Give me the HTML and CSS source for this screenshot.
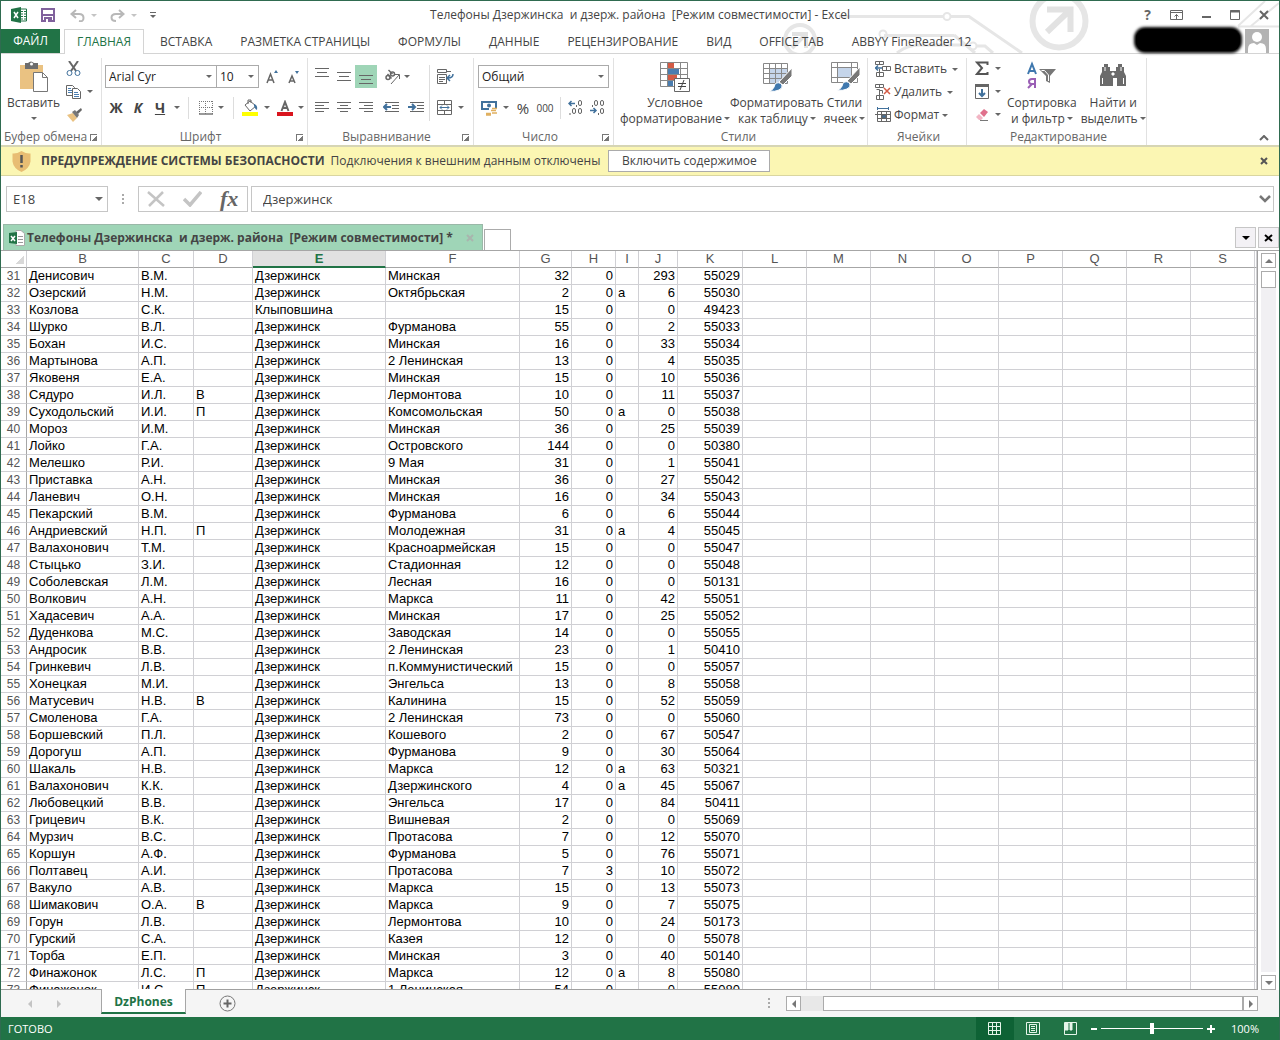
FILE: index.html
```html
<!DOCTYPE html>
<html lang="ru">
<head>
<meta charset="utf-8">
<meta name="viewport" content="width=device-width, initial-scale=1">
<title>Телефоны Дзержинска и дзерж. района - Excel</title>
<link rel="stylesheet" href="styles.css">
<script src="app.js" defer></script>
</head>
<body>
<div class="app">
  <header class="top">
    <svg class="art" width="500" height="52" viewBox="0 0 500 52" aria-hidden="true">
      <g fill="none" stroke="#e6e6e6" stroke-width="3">
        <path d="M60 15.500H164M172 15.500H190L243 52"/><circle cx="168" cy="15.500" r="3.500" stroke-width="2"/>
        <path d="M105 34.500H175M118 52Q128 44 140 44H190M198 45H206L214 52M175 34L196 52"/>
        <circle cx="194" cy="45" r="3.500" stroke-width="2"/><circle cx="104" cy="33" r="3.500" stroke-width="2"/>
        <path d="M459 25L486 0M472 25L500 2M459 25.500H500" stroke-width="2"/>
        <circle cx="280" cy="20" r="26.500" stroke-width="6"/>
        <circle cx="21" cy="39" r="15" stroke-width="4"/>
      </g>
      <g fill="none" stroke="#e2e2e2">
        <path d="M268 8.500H291.500V31M290 10L268 31" stroke-width="6"/>
        <path d="M13 33H27V47M27 33L13 47" stroke-width="4"/>
      </g>
    </svg>
    <div class="titlebar">
      <div class="qat">
        <svg class="xl" width="16" height="16" viewBox="0 0 16 16" aria-hidden="true"><path d="M9 2h6.500v12H9z" fill="#fff" stroke="#217346"/><path d="M10 4.500h2M13 4.500h2M10 7h2M13 7h2M10 9.500h2M13 9.500h2M10 12h2M13 12h2" stroke="#217346"/><path d="M0 2l10-2v16L0 14z" fill="#217346"/><path d="M3 5l4 6M7 5l-4 6" stroke="#fff" stroke-width="1.500"/></svg>
        <button class="tool save" aria-label="Сохранить"><svg width="14" height="14" viewBox="0 0 14 14"><path d="M1 1h12v12H1z" fill="#fff" stroke="#80619c" stroke-width="2"/><path d="M1 7h12" stroke="#80619c" stroke-width="2"/><path d="M3 9h8v5H3z" fill="#80619c"/><path d="M5 11h2v3H5z" fill="#fff"/></svg></button>
        <button class="tool undo" aria-label="Отменить"><svg width="15" height="13" viewBox="0 0 15 13" fill="none" stroke="#b8b8b8" stroke-width="2"><path d="M6 1L1.500 5 6 9M2 5h7q4.500 0 4.500 4T9 12"/></svg><i class="caret pale"></i></button>
        <button class="tool redo" aria-label="Вернуть"><svg width="15" height="13" viewBox="0 0 15 13" fill="none" stroke="#b8b8b8" stroke-width="2"><path d="M9 1l4.500 4L9 9M13 5H6Q1.500 5 1.500 8.500T6 12"/></svg><i class="caret pale"></i></button>
        <button class="tool" aria-label="Настройка панели"><svg width="6" height="6" viewBox="0 0 6 6"><path d="M0 .5h6" stroke="#666"/><path d="M0 3h6L3 6z" fill="#666"/></svg></button>
      </div>
      <h1 class="title">Телефоны Дзержинска&nbsp; и дзерж. района&nbsp; [Режим совместимости] - Excel</h1>
      <div class="winctl">
        <button class="tool help" aria-label="Справка">?</button>
        <button class="tool" aria-label="Параметры ленты"><svg width="13" height="10" viewBox="0 0 13 10" fill="none" stroke="#666"><path d="M.5.5h12v9H.5zM.5 2.500h12M6.500 9V4.500M4.500 6.500l2-2 2 2"/></svg></button>
        <button class="tool" aria-label="Свернуть"><svg width="9" height="10" viewBox="0 0 9 10"><path d="M0 7h9" stroke="#666" stroke-width="2"/></svg></button>
        <button class="tool" aria-label="Развернуть"><svg width="10" height="10" viewBox="0 0 10 10"><path d="M.5.500h9v9h-9z" fill="none" stroke="#666"/><path d="M0 1.500h10" stroke="#666" stroke-width="2"/></svg></button>
        <button class="tool" aria-label="Закрыть"><svg width="10" height="10" viewBox="0 0 10 10"><path d="M1 1l8 8M9 1l-8 8" stroke="#666" stroke-width="2"/></svg></button>
      </div>
    </div>
    <div class="tabbar">
      <nav class="tabs">
        <button class="file">ФАЙЛ</button>
        <button class="tab active">ГЛАВНАЯ</button>
        <button class="tab">ВСТАВКА</button>
        <button class="tab">РАЗМЕТКА СТРАНИЦЫ</button>
        <button class="tab">ФОРМУЛЫ</button>
        <button class="tab">ДАННЫЕ</button>
        <button class="tab">РЕЦЕНЗИРОВАНИЕ</button>
        <button class="tab">ВИД</button>
        <button class="tab">OFFICE TAB</button>
        <button class="tab">ABBYY FineReader 12</button>
      </nav>
      <div class="account">
        <span class="redacted"></span>
        <svg width="24" height="24" viewBox="0 0 24 24" aria-hidden="true"><path d="M0 0h24v24H0z" fill="#b3b3b3"/><circle cx="12" cy="8" r="5" fill="#fff"/><path d="M3 24v-4q0-6 6-6l3 2 3-2q6 0 6 6v4z" fill="#fff"/></svg>
      </div>
    </div>
  </header>

  <section class="ribbon">
    <div class="group g-clip">
      <div class="body">
        <button class="big paste"><svg width="30" height="32" viewBox="0 0 30 32"><path d="M1 4h23v24H1z" fill="#eac282"/><path d="M6 2h3q3-3 6 0h4v6H6z" fill="#6d6d6d"/><circle cx="12.500" cy="3" r="1.500" fill="#fff"/><path d="M14.500 11.500h9l5 5v14h-14z" fill="#fff" stroke="#777"/><path d="M23.500 11.500v5h5" fill="none" stroke="#777"/></svg><span>Вставить</span><i class="caret"></i></button>
        <div class="col clipcol">
          <button class="tool" aria-label="Вырезать"><svg width="16" height="16" viewBox="0 0 16 16" fill="none"><path d="M3 0l7 10M12 0L5 10" stroke="#666" stroke-width="2"/><circle cx="3.500" cy="12" r="2.500" stroke="#41719c"/><circle cx="11.500" cy="12" r="2.500" stroke="#41719c"/></svg></button>
          <button class="tool" aria-label="Копировать"><svg width="16" height="14" viewBox="0 0 16 14" fill="#fff" stroke="#666"><path d="M.5.500h6l2 2v8h-8z"/><path d="M2 3.500h3M2 5.500h4M2 7.500h4" stroke="#4a7db0"/><path d="M6.500 3.500h5l3 3v7h-8z"/><path d="M8 7.500h4M8 9.500h5M8 11.500h5" stroke="#4a7db0"/></svg><i class="caret"></i></button>
          <button class="tool" aria-label="Формат по образцу"><svg width="16" height="14" viewBox="0 0 16 14"><path d="M1 7l6-2 4 5-4 4z" fill="#eac282"/><path d="M6 4l3-2 4 5-2 3z" fill="#777"/><path d="M10 4l5-4 1 2-4 4z" fill="#666"/></svg></button>
        </div>
      </div>
      <div class="caption"><span>Буфер обмена</span><i class="launch"></i></div>
    </div>

    <div class="group g-font">
      <div class="body col">
        <div class="row">
          <label class="combo c-font"><select aria-label="Шрифт"><option>Arial Cyr</option></select><i class="caret"></i></label>
          <label class="combo c-size"><select aria-label="Размер шрифта"><option>10</option></select><i class="caret"></i></label>
          <button class="tool w22" aria-label="Увеличить размер"><svg width="12" height="14" viewBox="0 0 12 14" fill="none"><path d="M1 13L4.500 4 8 13M2 10h5" stroke="#666" stroke-width="1.500"/><path d="M8 3l2-3 2 3z" fill="#41719c"/></svg></button>
          <button class="tool w22" aria-label="Уменьшить размер"><svg width="12" height="14" viewBox="0 0 12 14" fill="none"><path d="M1 13l3-7 3 7M2 11h4" stroke="#666" stroke-width="1.500"/><path d="M7 1h4L9 4z" fill="#41719c"/></svg></button>
        </div>
        <div class="row">
          <button class="tool w22 glyph"><b>Ж</b></button>
          <button class="tool w22 glyph"><b><em>К</em></b></button>
          <button class="tool w22 glyph"><b class="ul">Ч</b></button>
          <button class="tool w12" aria-label="Подчёркивание"><i class="caret"></i></button>
          <i class="sep"></i>
          <button class="tool w34" aria-label="Границы"><svg width="14" height="14" viewBox="0 0 14 14" fill="none" stroke="#777"><path d="M0 .5h14M0 6.500h14M.5 0v13M6.500 0v13M13.500 0v13" stroke-dasharray="1 1"/><path d="M0 13h14" stroke-width="1.500"/></svg><i class="caret"></i></button>
          <i class="sep"></i>
          <button class="tool w34" aria-label="Цвет заливки"><svg width="17" height="17" viewBox="0 0 17 17"><path d="M3 6l5-4 6 5-6 5z" fill="#fff" stroke="#666"/><path d="M6 5V1h3v3" fill="none" stroke="#666"/><path d="M12 5q4 1 3 6-2-1-3-4z" fill="#41719c"/><path d="M0 13h16v4H0z" fill="#ff0"/></svg><i class="caret"></i></button>
          <button class="tool w34" aria-label="Цвет шрифта"><svg width="16" height="16" viewBox="0 0 16 16"><path d="M4.500 11L8 2l3.500 9M5.500 8h5" fill="none" stroke="#666" stroke-width="2"/><path d="M0 12h16v4H0z" fill="#d9141e"/></svg><i class="caret"></i></button>
        </div>
      </div>
      <div class="caption"><span>Шрифт</span><i class="launch"></i></div>
    </div>

    <div class="group g-align">
      <div class="body">
        <div class="col">
          <div class="row">
            <button class="tool w22 lines-top" aria-label="По верхнему краю"><svg width="14" height="9" viewBox="0 0 14 9" stroke="#666"><path d="M0 .5h14M2 4.500h10M0 8.500h14"/></svg></button>
            <button class="tool w22" aria-label="По середине"><svg width="14" height="9" viewBox="0 0 14 9" stroke="#666"><path d="M0 .5h14M2 4.500h10M0 8.500h14"/></svg></button>
            <button class="tool w22 on" aria-label="По нижнему краю"><svg width="14" height="9" viewBox="0 0 14 9" stroke="#666"><path d="M0 .5h14M2 4.500h10M0 8.500h14"/></svg></button>
            <button class="tool orient" aria-label="Ориентация"><svg width="17" height="16" viewBox="0 0 17 16" fill="none" stroke="#666" stroke-width="1.500"><circle cx="4" cy="8.500" r="2"/><path d="M3.500 5l4 4.500"/><circle cx="8.500" cy="5" r="2"/><path d="M4.500 1l4 4"/><path d="M7 15L15 6M11 5.500h4.500V10" stroke-width="1"/></svg><i class="caret"></i></button>
          </div>
          <div class="row">
            <button class="tool w22" aria-label="По левому краю"><svg width="14" height="11" viewBox="0 0 14 11" stroke="#666"><path d="M0 .5h14M0 3.500h9M0 6.500h14M0 9.500h9"/></svg></button>
            <button class="tool w22" aria-label="По центру"><svg width="14" height="11" viewBox="0 0 14 11" stroke="#666"><path d="M0 .5h14M3 3.500h8M0 6.500h14M3 9.500h8"/></svg></button>
            <button class="tool w22" aria-label="По правому краю"><svg width="14" height="11" viewBox="0 0 14 11" stroke="#666"><path d="M0 .5h14M5 3.500h9M0 6.500h14M5 9.500h9"/></svg></button>
            <button class="tool w26" aria-label="Уменьшить отступ"><svg width="16" height="11" viewBox="0 0 16 11" fill="none" stroke="#666"><path d="M2 .5h14M9 3.500h7M9 6.500h7M2 9.500h14"/><path d="M1 5h7M4 2L1 5l3 3" stroke="#41719c" stroke-width="2"/></svg></button>
            <button class="tool w22" aria-label="Увеличить отступ"><svg width="16" height="11" viewBox="0 0 16 11" fill="none" stroke="#666"><path d="M2 .5h14M9 3.500h7M9 6.500h7M2 9.500h14"/><path d="M0 5h7M4 2l3 3-3 3" stroke="#41719c" stroke-width="2"/></svg></button>
          </div>
        </div>
        <i class="sep tall"></i>
        <div class="col">
          <button class="tool line" aria-label="Перенос текста"><svg width="17" height="15" viewBox="0 0 17 15" fill="none" stroke="#666"><path d="M.5.500h9v3h-9zM.5 5.500h9v9h-9zM2 8.500h6M2 10.500h6M2 12.500h4"/><path d="M10 2.500h4" /><path d="M16 5q0 4-5 4M13 6l-3 3 3 3" stroke="#41719c" stroke-width="1.500"/></svg></button>
          <button class="tool line" aria-label="Объединить"><svg width="15" height="15" viewBox="0 0 15 15" fill="none" stroke="#666"><path d="M.5.500h14v14H.5zM.5 4.500h14M.5 10.500h14M7.500 0v4M7.500 11v4"/><path d="M3 7.500h9M5 5.500l-2 2 2 2M10 5.500l2 2-2 2" stroke="#41719c"/></svg><i class="caret"></i></button>
        </div>
      </div>
      <div class="caption"><span>Выравнивание</span><i class="launch"></i></div>
    </div>

    <div class="group g-num">
      <div class="body col">
        <div class="row"><label class="combo c-num"><select aria-label="Числовой формат"><option>Общий</option></select><i class="caret"></i></label></div>
        <div class="row">
          <button class="tool w34" aria-label="Финансовый формат"><svg width="17" height="16" viewBox="0 0 17 16" fill="none"><path d="M1 2h14v7H1z" stroke="#41719c" stroke-width="2"/><circle cx="8" cy="5.500" r="2" fill="#41719c"/><path d="M8 8h9v8H8z" fill="#fff"/><path d="M11 8.500h5M10 10.500h5M5 13.500h5M11 13h5M5 15h5" stroke="#e0b060" stroke-width="1.500"/></svg><i class="caret"></i></button>
          <button class="tool w22 pct">%</button>
          <button class="tool w22 zeros">000</button>
          <i class="sep slim"></i>
          <button class="tool w22" aria-label="Увеличить разрядность"><svg width="15" height="15" viewBox="0 0 15 15" fill="none" stroke="#666"><path d="M1 3.500h6M3.500 1L1 3.500 3.500 6" stroke="#41719c" stroke-width="1.500"/><rect x="10.500" y=".5" width="3" height="5" rx="1.500"/><rect x="4.500" y="8.500" width="3" height="5" rx="1.500"/><rect x="10.500" y="8.500" width="3" height="5" rx="1.500"/><path d="M8.500 5v2M2 13v2"/></svg></button>
          <button class="tool w22" aria-label="Уменьшить разрядность"><svg width="15" height="15" viewBox="0 0 15 15" fill="none" stroke="#666"><path d="M0 10.500h6M3.500 8L6 10.500 3.500 13" stroke="#41719c" stroke-width="1.500"/><rect x="4.500" y=".5" width="3" height="5" rx="1.500"/><rect x="10.500" y=".5" width="3" height="5" rx="1.500"/><rect x="10.500" y="8.500" width="3" height="5" rx="1.500"/><path d="M2.500 5v2M8.500 13v2"/></svg></button>
        </div>
      </div>
      <div class="caption"><span>Число</span><i class="launch"></i></div>
    </div>

    <div class="group g-style">
      <div class="body">
        <button class="big"><svg width="32" height="32" viewBox="0 0 32 32"><path d="M1.500 1.500h27v24h-27z" fill="#fff"/><path d="M9 1h6v6H9zM9 13h9v6H9z" fill="#d35b45"/><path d="M9 7h11v6H9zM9 19h5v6H9z" fill="#4a7db0"/><path d="M1.500 1.500h27v24h-27zM1.500 7.500h27M1.500 13.500h27M1.500 19.500h27M8.500 1v25M21.500 1v25" fill="none" stroke="#888"/><path d="M15.500 17.500h15v13h-15z" fill="#fff" stroke="#666"/><path d="M19 22.500h8M19 25.500h8M25 19l-4 10" stroke="#444"/></svg><span>Условное<br>форматирование<i class="caret in"></i></span></button>
        <button class="big"><svg width="32" height="32" viewBox="0 0 32 32"><path d="M3 3h24v19H3z" fill="#fff"/><path d="M9 8h18v14H9z" fill="#c5d5ea"/><path d="M2.500 2.500h24v20h-24zM2.500 7.500h24M2.500 12.500h24M2.500 17.500h24M8.500 2v20M14.500 2v20M20.500 2v20" fill="none" stroke="#888"/><path d="M31 7v8l-9 9-4-3z" fill="#777" stroke="#fff"/><path d="M8 30q5-1 6-7 4-3 7 1 1 3-3 5-4 2-10 1z" fill="#3f78ae" stroke="#fff"/></svg><span>Форматировать<br>как таблицу<i class="caret in"></i></span></button>
        <button class="big"><svg width="32" height="32" viewBox="0 0 32 32"><path d="M3 1h24v21H3z" fill="#fff"/><path d="M9 6h13v10H9z" fill="#c5d5ea"/><path d="M2.500 1.500h26v20h-26zM2.500 6.500h26M2.500 16.500h26M8.500 1v20M22.500 1v20" fill="none" stroke="#888"/><path d="M31 6v8l-9 9-4-3z" fill="#777" stroke="#fff"/><path d="M8 29q5-1 6-7 4-3 7 1 1 3-3 5-4 2-10 1z" fill="#3f78ae" stroke="#fff"/></svg><span>Стили<br>ячеек<i class="caret in"></i></span></button>
      </div>
      <div class="caption"><span>Стили</span></div>
    </div>

    <div class="group g-cells">
      <div class="body col">
        <button class="tool item wide"><svg width="16" height="16" viewBox="0 0 16 16" fill="none" stroke="#666"><path d="M.5.500h8v3h-8zM4.500.500v3M1.500 11.500h7v4h-7zM4.500 8v8M7.500 5.500h8v4h-8zM11.500 5v4"/><path d="M0 7h7M3 4.500L.5 7 3 9.500" stroke="#41719c" stroke-width="1.500"/></svg><span>Вставить</span><i class="caret"></i></button>
        <button class="tool item wide"><svg width="16" height="16" viewBox="0 0 16 16" fill="none" stroke="#666"><path d="M.5.500h8v3h-8zM4.500.500v3M1.500 11.500h7v4h-7zM4.500 8v8M1.500 5.500h3v4M4.500 6.500h3v3"/><path d="M9 4l6 6M15 4l-6 6" stroke="#d35b45" stroke-width="1.500"/></svg><span>Удалить</span><i class="caret"></i></button>
        <button class="tool item"><svg width="16" height="16" viewBox="0 0 16 16" fill="none" stroke="#666"><path d="M2.500 4.500h13v10h-13zM6.500 4v10M11.500 4v10M0 7.500h15M2 11.500h13"/><path d="M7 8h4v3H7z" fill="#41719c"/><path d="M2 1.500h12M2.500 0v3M13.500 0v3" stroke="#41719c"/></svg><span>Формат</span><i class="caret"></i></button>
      </div>
      <div class="caption"><span>Ячейки</span></div>
    </div>

    <div class="group g-edit">
      <div class="body">
        <div class="col editcol">
          <button class="tool" aria-label="Сумма"><svg width="14" height="15" viewBox="0 0 14 15"><path d="M12.500 4V1.500H2l5 5.500-5 6h10.500V11" fill="none" stroke="#555" stroke-width="2"/></svg><i class="caret"></i></button>
          <button class="tool" aria-label="Заполнить"><svg width="14" height="15" viewBox="0 0 14 15" fill="none"><path d="M.5 1.500h13v13H.5z" stroke="#666"/><path d="M0 1.500h14" stroke="#666" stroke-width="3"/><path d="M7 5v7M4 9l3 3 3-3" stroke="#41719c" stroke-width="2"/></svg><i class="caret"></i></button>
          <button class="tool" aria-label="Очистить"><svg width="14" height="14" viewBox="0 0 14 14"><path d="M5 5l4-4 4 3-4 5z" fill="#e0708c"/><path d="M4 6l4 4-2 2H4L1 9z" fill="#f2b5c4"/><path d="M5 12.500h8" stroke="#777"/></svg><i class="caret"></i></button>
        </div>
        <button class="big"><svg width="32" height="32" viewBox="0 0 32 32" fill="none"><path d="M2 13L6 3l4 10M3.500 10h5" stroke="#3f78ae" stroke-width="2"/><path d="M9 27v-9H6q-3 0-3 2.500T6 23h3M6 23l-4 4" stroke="#9a5fb5" stroke-width="2"/><path d="M13 8h17l-6 7v7l-4-2v-5z" fill="#777"/><path d="M15.500 9.500h3l4 4.500v6" stroke="#fff"/></svg><span>Сортировка<br>и фильтр<i class="caret in"></i></span></button>
        <button class="big"><svg width="32" height="32" viewBox="0 0 32 32" fill="#6b6b6b"><path d="M7 3h4v3h2v4h6V6h2V3h4v3h2v5l2 4v10h-9v-8h-4v8H3V15l2-4V6h2z"/><path d="M15 12h2v2h-2zM5.500 17v6M26.500 17v6M8 6v4M24 6v4" fill="#fff" stroke="#fff" stroke-width="1"/></svg><span>Найти и<br>выделить<i class="caret in"></i></span></button>
      </div>
      <div class="caption"><span>Редактирование</span></div>
    </div>
    <button class="tool collapse" aria-label="Свернуть ленту"><svg width="10" height="6" viewBox="0 0 10 6"><path d="M1 5l4-4 4 4" fill="none" stroke="#666" stroke-width="2"/></svg></button>
  </section>

  <section class="warning">
    <svg width="19" height="21" viewBox="0 0 19 21" aria-hidden="true"><path d="M9.500 0q5 3 9 2.500v8q-1 7-9 10.500-8-3.500-9-10.500v-8Q4.500 3 9.500 0z" fill="#e8bd73"/><path d="M9.500 4v8M9.500 14v2.500" stroke="#555" stroke-width="2.500"/></svg>
    <strong>ПРЕДУПРЕЖДЕНИЕ СИСТЕМЫ БЕЗОПАСНОСТИ</strong>
    <span class="msg">Подключения к внешним данным отключены</span>
    <button class="enable">Включить содержимое</button>
    <button class="tool dismiss" aria-label="Закрыть сообщение"><svg width="8" height="8" viewBox="0 0 8 8"><path d="M1 1l6 6M7 1L1 7" stroke="#555" stroke-width="2"/></svg></button>
  </section>

  <section class="formula">
    <label class="combo c-name"><select aria-label="Имя ячейки"><option>E18</option></select><i class="caret big-caret"></i></label>
    <i class="dots"></i>
    <div class="fx">
      <button class="tool" aria-label="Отмена"><svg width="18" height="16" viewBox="0 0 18 16"><path d="M1 1l16 14M16 1L2 15" stroke="#c4c4c4" stroke-width="2.500"/></svg></button>
      <button class="tool" aria-label="Ввод"><svg width="19" height="16" viewBox="0 0 19 16"><path d="M1 8l6 6L18 1" fill="none" stroke="#c4c4c4" stroke-width="3.500"/></svg></button>
      <button class="tool fn" aria-label="Вставить функцию">fx</button>
    </div>
    <div class="entry">
      <input type="text" aria-label="Строка формул" value="Дзержинск">
      <button class="tool" aria-label="Развернуть строку формул"><svg width="12" height="8" viewBox="0 0 12 8"><path d="M1 1l5 5 5-5" fill="none" stroke="#777" stroke-width="2.500"/></svg></button>
    </div>
  </section>

  <nav class="docs">
    <div class="doc"><svg width="16" height="16" viewBox="0 0 16 16" aria-hidden="true"><path d="M7 .5h5l3.500 3v12H7z" fill="#fff" stroke="#aaa"/><path d="M9 6.500h5M9 9.500h5M9 12.500h5" stroke="#999"/><path d="M0 3l8-1v12l-8-1z" fill="#217346"/><path d="M2 6l4 5M6 6l-4 5" stroke="#fff" stroke-width="1.500"/></svg><span>Телефоны Дзержинска&nbsp; и дзерж. района&nbsp; [Режим совместимости] *</span><button class="tool" aria-label="Закрыть документ"><svg width="8" height="8" viewBox="0 0 8 8"><path d="M1 1l6 6M7 1L1 7" stroke="#a9b5ae" stroke-width="2"/></svg></button></div>
    <button class="newdoc" aria-label="Новый документ"></button>
    <div class="docctl">
      <button class="sq" aria-label="Список документов"><i class="caret black"></i></button>
      <button class="sq" aria-label="Закрыть"><svg width="9" height="8" viewBox="0 0 9 8"><path d="M1 1l7 6M8 1L1 7" stroke="#000" stroke-width="2"/></svg></button>
    </div>
  </nav>

  <main class="work">
    <div class="gridwrap">
      <table class="grid">
        <colgroup><col class="k-row"><col class="k-b"><col class="k-c"><col class="k-d"><col class="k-e"><col class="k-f"><col class="k-g"><col class="k-h"><col class="k-i"><col class="k-j"><col class="k-k"><col class="k-x" span="8"><col></colgroup>
        <thead><tr><th class="corner" aria-label="Выделить всё"></th><th>B</th><th>C</th><th>D</th><th class="sel">E</th><th>F</th><th>G</th><th>H</th><th>I</th><th>J</th><th>K</th><th>L</th><th>M</th><th>N</th><th>O</th><th>P</th><th>Q</th><th>R</th><th>S</th><th></th></tr></thead>
        <tbody id="rows"></tbody>
      </table>
    </div>
    <div class="vscroll">
      <button class="sb" aria-label="Вверх"><i class="tri up"></i></button>
      <div class="vtrack"><div class="vthumb"></div></div>
      <button class="sb" aria-label="Вниз"><i class="tri down"></i></button>
    </div>
  </main>

  <div class="sheetbar">
    <div class="navs"><i class="tri left pale"></i><i class="tri right pale"></i></div>
    <button class="sheet">DzPhones</button>
    <button class="tool add" aria-label="Новый лист"><svg width="17" height="17" viewBox="0 0 17 17"><circle cx="8.500" cy="8.500" r="7.500" fill="none" stroke="#777"/><path d="M8.500 4.500v8M4.500 8.500h8" stroke="#666" stroke-width="2"/></svg></button>
    <i class="dots"></i>
    <div class="hscroll">
      <button class="sb" aria-label="Влево"><i class="tri left"></i></button>
      <div class="htrack"><div class="hthumb"></div></div>
      <button class="sb" aria-label="Вправо"><i class="tri right"></i></button>
    </div>
  </div>

  <footer class="status">
    <span>ГОТОВО</span>
    <div class="views">
      <button class="view on" aria-label="Обычный"><svg width="14" height="14" viewBox="0 0 14 14" fill="none" stroke="#e6f5ea"><path d="M.5.500h12v12H.5zM4.500 0v13M8.500 0v13M0 4.500h13M0 8.500h13"/></svg></button>
      <button class="view" aria-label="Разметка страницы"><svg width="14" height="14" viewBox="0 0 14 14" fill="none" stroke="#e6f5ea"><path d="M.5.500h13v12H.5zM3.500 2.500h7v8h-7zM5 4.500h4M5 6.500h4M5 8.500h4"/></svg></button>
      <button class="view" aria-label="Страничный"><svg width="14" height="14" viewBox="0 0 14 14" fill="none" stroke="#e6f5ea"><path d="M.5.500h12v12H.5z"/><path d="M1 1h3v7H1zM6 1h2v7H6z" fill="#e6f5ea"/></svg></button>
    </div>
    <div class="zoom">
      <button class="tool" aria-label="Уменьшить"><svg width="6" height="10" viewBox="0 0 6 10"><path d="M0 5h6" stroke="#fff" stroke-width="2"/></svg></button>
      <input type="range" min="0" max="100" value="50" aria-label="Масштаб">
      <button class="tool" aria-label="Увеличить"><svg width="8" height="8" viewBox="0 0 8 8"><path d="M0 4h8M4 0v8" stroke="#fff" stroke-width="2"/></svg></button>
      <span>100%</span>
    </div>
  </footer>
</div>
</body>
</html>
```
FILE: styles.css
```css
* { box-sizing: border-box; }

body {
  margin: 0;
  background: #fff;
  color: #444;
  font: 12px/16px "Open Sans", "Noto Sans", sans-serif;
}

button, select, input { font: inherit; color: inherit; margin: 0; }
button { padding: 0; border: 0; background: none; white-space: nowrap; }
svg { display: block; flex: none; }
i { font-style: normal; }

.app {
  display: flex;
  flex-direction: column;
  height: 100vh;
  min-height: 480px;
  border: 1px solid #2f6b50;
  border-bottom: 0;
  overflow: hidden;
}

/* shared pieces */
.row { display: flex; align-items: center; height: 23px; }
.col { display: flex; flex-direction: column; }
.tool { display: flex; align-items: center; justify-content: center; gap: 5px; }
.w12 { width: 12px; }
.w22 { width: 22px; }
.w26 { width: 28px; }
.w34 { width: 34px; }
.caret {
  flex: none;
  width: 0;
  height: 0;
  border: 3px solid transparent;
  border-top-color: #666;
  border-bottom: 0;
}
.caret.pale { border-top-color: #c4c4c4; }
.caret.black { border-width: 4px 4px 0; border-top-color: #000; }
.caret.in { display: inline-block; margin-left: 2px; vertical-align: 3px; }
.big-caret { border-width: 4px 4px 0; }
.sep { width: 1px; height: 22px; margin: 0 5px; background: #ddd; }
.sep.slim { margin: 0 3px 0 4px; }
.sep.tall { height: 56px; margin: 0 7px 0 2px; }
.combo { display: grid; align-items: center; border: 1px solid #ababab; background: #fff; height: 23px; }
.combo > * { grid-area: 1 / 1; }
.combo select { appearance: none; border: 0; background: none; width: 100%; padding: 0 3px; color: #222; }
.combo .caret { justify-self: end; margin-right: 4px; pointer-events: none; }
.dots { width: 2px; height: 11px; background: repeating-linear-gradient(#aaa 0 2px, transparent 2px 4px); }

/* title and tabs */
.top { position: relative; flex: none; }
.art { position: absolute; top: 0; right: 0; z-index: -1; }
.titlebar { display: grid; grid-template-columns: 1fr auto 1fr; align-items: center; height: 28px; }
.qat { display: flex; align-items: center; padding-left: 10px; }
.save { margin: 0 15px 0 14px; }
.undo, .redo { gap: 6px; margin-right: 13px; }
.title { margin: 0; font-size: 12px; font-weight: 400; }
.winctl { display: flex; align-items: center; justify-content: flex-end; gap: 19px; padding-right: 10px; }
.help { font-size: 14px; font-weight: 700; color: #666; }
.tabbar { display: flex; justify-content: space-between; height: 25px; border-bottom: 1px solid #d4d4d4; }
.tabs { display: flex; gap: 4px; }
.tab, .file { height: 25px; padding: 0 12px; }
.file { height: 24px; width: 59px; background: #217346; color: #fff; }
.tab.active { border: 1px solid #d4d4d4; border-bottom: 0; background: #fff; color: #217346; }
.account { display: flex; align-items: flex-start; gap: 5px; padding-right: 10px; }
.redacted { width: 104px; height: 22px; border-radius: 9px; background: #000; box-shadow: 0 0 3px 2px #000; }

/* ribbon */
.ribbon { display: flex; flex: none; height: 93px; border-bottom: 2px solid #d6d5b4; }
.group { display: flex; flex-direction: column; margin-top: 4px; border-right: 1px solid #e1e1e1; }
.group .body { flex: 1; padding-top: 7px; }
.group .body:not(.col) { display: flex; }
.group .body.col, .g-align .col { gap: 8px; }
.caption { display: flex; align-items: center; height: 16px; padding-right: 4px; color: #666; }
.caption span { flex: 1; text-align: center; white-space: nowrap; }
.launch { width: 7px; height: 7px; border: solid #777; border-width: 1px 0 0 1px; background: linear-gradient(135deg, transparent 55%, #777 55%); }
.big { display: flex; flex-direction: column; align-items: center; gap: 2px; }
.g-clip { width: 101px; }
.g-clip .caption span { text-align: left; padding-left: 3px; }
.g-font { width: 206px; padding-left: 3px; }
.g-align { width: 166px; padding-left: 3px; }
.g-num { width: 140px; padding-left: 4px; }
.g-style { width: 254px; }
.g-cells { width: 99px; padding-left: 7px; }
.g-edit { width: 180px; padding-left: 8px; }
.g-style .body { justify-content: space-between; padding: 3px 5px 0 6px; }
.g-edit .body { gap: 4px; padding-top: 3px; }
.g-clip .body { gap: 6px; padding: 3px 0 0 6px; }
.paste .caret { margin-top: 4px; }
.clipcol { gap: 8px; align-items: flex-start; }
.clipcol .tool { height: 15px; }
.c-font { width: 112px; }
.c-size { width: 43px; margin-left: -1px; margin-right: 2px; }
.glyph { font-size: 14px; color: #444; }
.ul { text-decoration: underline; }
.lines-top { height: 15px; align-self: flex-start; }
.on { background: #9fd5b7; }
.tool.on { height: 23px; align-items: flex-end; padding-bottom: 4px; }
.orient { padding-left: 7px; gap: 3px; }
.line { height: 23px; gap: 6px; justify-content: flex-start; }
.c-num { width: 131px; }
.pct { font-size: 15px; }
.zeros { font-size: 10px; }
.g-cells .body.col { gap: 7px; padding-top: 3px; }
.item { height: 16px; gap: 3px; justify-content: flex-start; }
.item.wide .caret { margin-left: 2px; }
.editcol { gap: 8px; width: 28px; align-items: flex-start; }
.editcol .tool { height: 15px; gap: 6px; }
.collapse { margin: auto 10px 4px auto; }

/* security bar */
.warning { display: flex; flex: none; align-items: center; height: 29px; padding: 0 11px; background: #fbf6b3; border-bottom: 1px solid #dad6a0; white-space: nowrap; }
.warning strong { margin-left: 10px; }
.msg { margin-left: 6px; }
.enable { width: 162px; height: 22px; margin-left: 8px; border: 1px solid #ababab; background: #fff; }
.dismiss { margin-left: auto; }

/* formula bar */
.formula { display: flex; flex: none; align-items: center; height: 46px; padding: 0 5px; font-size: 13px; }
.c-name { width: 102px; height: 26px; border-color: #c6c6c6; }
.c-name select { padding-left: 6px; color: #444; }
.formula .dots { margin: 0 14px; }
.fx, .entry { display: flex; align-items: center; height: 26px; border: 1px solid #c6c6c6; }
.fx { gap: 18px; width: 110px; margin-right: 3px; padding-left: 8px; }
.fn { font: italic 700 22px/24px "Liberation Serif", serif; color: #666; }
.entry { flex: 1; padding-right: 2px; }
.entry input { flex: 1; min-width: 0; border: 0; padding: 0 11px; background: none; }

/* open documents */
.docs { display: flex; flex: none; align-items: flex-end; height: 29px; padding-left: 2px; border-bottom: 1px solid #a6a6a6; }
.doc { display: flex; align-items: center; height: 26px; width: 480px; padding: 0 8px 0 5px; border: 1px solid #9ab8a8; border-bottom: 0; background: #9fd5b7; font-weight: 700; white-space: nowrap; }
.doc span { flex: 1; padding-left: 2px; }
.newdoc { width: 27px; height: 21px; margin-left: 1px; border: 1px solid #ababab; border-bottom: 0; }
.docctl { display: flex; gap: 2px; margin: 0 0 2px auto; }
.sq { display: grid; place-items: center; width: 21px; height: 21px; border: 1px solid #c6c6c6; background: #f3f1f5; }

/* worksheet */
.work { display: flex; flex: 1; min-height: 0; }
.gridwrap { flex: 1; min-width: 0; overflow: hidden; border-right: 1px solid #a0a0a0; border-bottom: 1px solid #a0a0a0; }
.grid { width: 100%; table-layout: fixed; border-collapse: separate; border-spacing: 0; font: 13px/16px "Liberation Sans", Arial, sans-serif; color: #000; }
.k-row { width: 26px; }
.k-b { width: 112px; }
.k-c { width: 55px; }
.k-d { width: 59px; }
.k-e { width: 133px; }
.k-f { width: 134px; }
.k-g { width: 52px; }
.k-h { width: 44px; }
.k-i { width: 23px; }
.k-j { width: 39px; }
.k-k { width: 65px; }
.k-x { width: 64px; }
.grid th, .grid td { height: 17px; padding: 0 2px; border: solid #d0d0d4; border-width: 0 1px 1px 0; white-space: nowrap; overflow: hidden; }
.grid th { padding: 0; font-weight: 400; color: #555; text-align: center; }
.grid thead th { border-bottom-color: #a6a6a6; }
.grid tbody th { border-right-color: #a6a6a6; font-size: 12px; }
.grid .num { text-align: right; }
.grid thead .sel { background: #e1e1e1; color: #217346; border-bottom: 2px solid #217346; line-height: 15px; font-weight: 700; }
.grid .corner { background: linear-gradient(135deg, transparent 50%, #d8d8d8 50%) 14px 4px / 9px 9px no-repeat; }

/* scroll bars */
.vscroll { display: flex; flex-direction: column; align-items: center; gap: 3px; width: 21px; padding-top: 2px; }
.sb { display: grid; place-items: center; flex: none; width: 15px; height: 15px; border: 1px solid #ababab; background: #fff; }
.vtrack { flex: 1; width: 15px; background: #f1f0f3; }
.vthumb { height: 17px; border: 1px solid #ababab; background: #fff; }
.tri { width: 0; height: 0; border: 4px solid transparent; }
.tri.up { border-top: 0; border-bottom-color: #777; }
.tri.down { border-bottom: 0; border-top-color: #777; }
.tri.left { border-left: 0; border-right-color: #777; }
.tri.right { border-right: 0; border-left-color: #777; }
.tri.left.pale { border-right-color: #c4c4c4; }
.tri.right.pale { border-left-color: #c4c4c4; }
.sheetbar { display: flex; flex: none; align-items: center; height: 27px; padding-right: 21px; background: #f5f5f5; }
.navs { display: flex; gap: 25px; width: 100px; padding-left: 27px; }
.sheet { align-self: flex-start; width: 85px; height: 25px; margin-top: -1px; padding-top: 2px; border: solid #a6a6a6; border-width: 0 1px; border-bottom: 2px solid #217346; background: #fff; color: #217346; font-weight: 700; z-index: 1; }
.add { margin-left: 33px; }
.sheetbar .dots { margin: 0 16px 0 auto; }
.hscroll { display: flex; width: 472px; }
.htrack { flex: 1; background: #e8e8e8; }
.hthumb { width: 95%; height: 15px; margin-left: auto; border: 1px solid #ababab; background: #fff; }

/* status bar */
.status { display: flex; flex: none; align-items: center; height: 23px; padding: 0 20px 0 7px; background: #217346; color: #fff; font-size: 11px; }
.views { display: flex; margin-left: auto; height: 100%; }
.view { display: grid; place-items: center; width: 38px; }
.view.on { background: #0e6235; }
.zoom { display: flex; align-items: center; gap: 4px; padding-left: 1px; }
.zoom input { appearance: none; width: 102px; height: 12px; background: linear-gradient(#fff, #fff) center / 100% 1px no-repeat; }
.zoom input::-webkit-slider-thumb { appearance: none; width: 4px; height: 11px; background: #fff; }
.zoom span { padding-left: 12px; }
```
FILE: app.js
```js
// number, surname, initials, flag, town, street, house, block, letter, flat, phone
const data = `
31,Денисович,В.М.,,Дзержинск,Минская,32,0,,293,55029
32,Озерский,Н.М.,,Дзержинск,Октябрьская,2,0,а,6,55030
33,Козлова,С.К.,,Клыповшина,,15,0,,0,49423
34,Шурко,В.Л.,,Дзержинск,Фурманова,55,0,,2,55033
35,Бохан,И.С.,,Дзержинск,Минская,16,0,,33,55034
36,Мартынова,А.П.,,Дзержинск,2 Ленинская,13,0,,4,55035
37,Яковеня,Е.А.,,Дзержинск,Минская,15,0,,10,55036
38,Сядуро,И.Л.,В,Дзержинск,Лермонтова,10,0,,11,55037
39,Суходольский,И.И.,П,Дзержинск,Комсомольская,50,0,а,0,55038
40,Мороз,И.М.,,Дзержинск,Минская,36,0,,25,55039
41,Лойко,Г.А.,,Дзержинск,Островского,144,0,,0,50380
42,Мелешко,Р.И.,,Дзержинск,9 Мая,31,0,,1,55041
43,Приставка,А.Н.,,Дзержинск,Минская,36,0,,27,55042
44,Ланевич,О.Н.,,Дзержинск,Минская,16,0,,34,55043
45,Пекарский,В.М.,,Дзержинск,Фурманова,6,0,,6,55044
46,Андриевский,Н.П.,П,Дзержинск,Молодежная,31,0,а,4,55045
47,Валахонович,Т.М.,,Дзержинск,Красноармейская,15,0,,0,55047
48,Стыцько,З.И.,,Дзержинск,Стадионная,12,0,,0,55048
49,Соболевская,Л.М.,,Дзержинск,Лесная,16,0,,0,50131
50,Волкович,А.Н.,,Дзержинск,Маркса,11,0,,42,55051
51,Хадасевич,А.А.,,Дзержинск,Минская,17,0,,25,55052
52,Дуденкова,М.С.,,Дзержинск,Заводская,14,0,,0,55055
53,Андросик,В.В.,,Дзержинск,2 Ленинская,23,0,,1,50410
54,Гринкевич,Л.В.,,Дзержинск,п.Коммунистический,15,0,,0,55057
55,Хонецкая,М.И.,,Дзержинск,Энгельса,13,0,,8,55058
56,Матусевич,Н.В.,В,Дзержинск,Калинина,15,0,,52,55059
57,Смоленова,Г.А.,,Дзержинск,2 Ленинская,73,0,,0,55060
58,Боршевский,П.Л.,,Дзержинск,Кошевого,2,0,,67,50547
59,Дорогуш,А.П.,,Дзержинск,Фурманова,9,0,,30,55064
60,Шакаль,Н.В.,,Дзержинск,Маркса,12,0,а,63,50321
61,Валахонович,К.К.,,Дзержинск,Дзержинского,4,0,а,45,55067
62,Любовецкий,В.В.,,Дзержинск,Энгельса,17,0,,84,50411
63,Грицевич,В.К.,,Дзержинск,Вишневая,2,0,,0,55069
64,Мурзич,В.С.,,Дзержинск,Протасова,7,0,,12,55070
65,Коршун,А.Ф.,,Дзержинск,Фурманова,5,0,,76,55071
66,Полтавец,А.И.,,Дзержинск,Протасова,7,3,,10,55072
67,Вакуло,А.В.,,Дзержинск,Маркса,15,0,,13,55073
68,Шимакович,О.А.,В,Дзержинск,Маркса,9,0,,7,55075
69,Горун,Л.В.,,Дзержинск,Лермонтова,10,0,,24,50173
70,Гурский,С.А.,,Дзержинск,Казея,12,0,,0,55078
71,Торба,Е.П.,,Дзержинск,Минская,3,0,,40,50140
72,Финажонок,Л.С.,П,Дзержинск,Маркса,12,0,а,8,55080
73,Финажонок,И.С.,П,Дзержинск,1 Ленинская,54,0,,0,55080`;

const numeric = new Set([6, 7, 9, 10]);
const body = document.getElementById('rows');
const columns = 20;

for (const line of data.trim().split('\n')) {
  const fields = line.split(',');
  const row = body.insertRow();
  for (let i = 0; i < columns; i++) {
    const cell = document.createElement(i ? 'td' : 'th');
    cell.textContent = fields[i] || '';
    if (numeric.has(i)) cell.className = 'num';
    row.append(cell);
  }
}
```
